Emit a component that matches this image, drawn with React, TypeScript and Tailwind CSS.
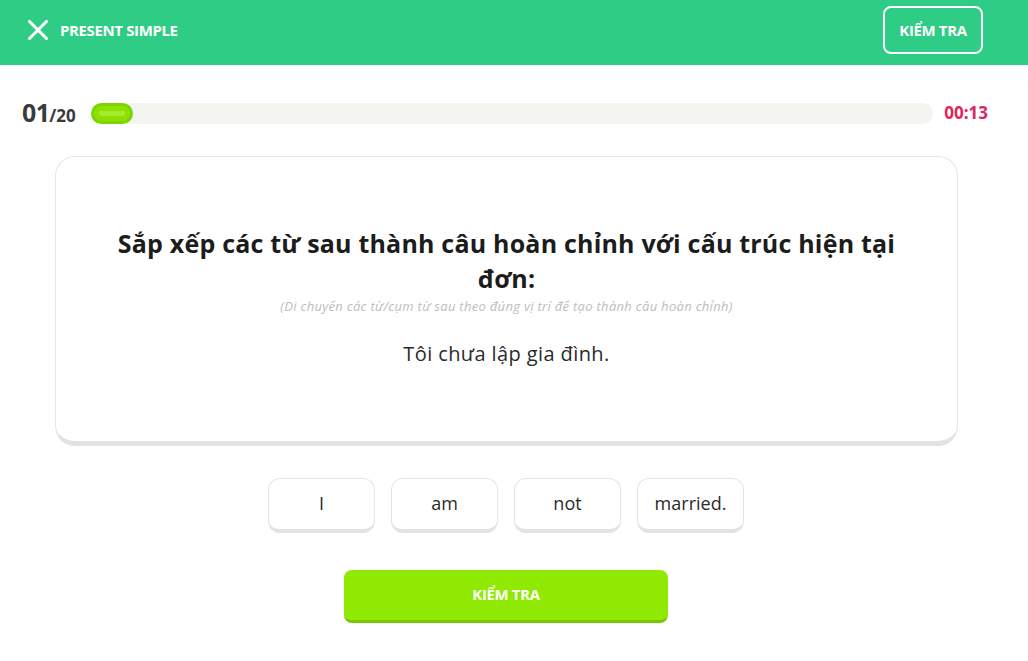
import { X } from 'lucide-react';

const words = ['I', 'am', 'not', 'married.'];

export default function App() {
    return (
        <div className="min-h-screen bg-white flex flex-col" style={{ fontFamily: '"Open Sans", "Noto Sans", sans-serif' }}>
            {/* Top bar */}
            <div className="h-[65px] bg-[#2ecc85] flex items-center justify-between pl-[21px] pr-[45px] pb-[5px]">
                <div className="flex items-center gap-[5px]">
                    <X className="w-[34px] h-[34px] text-white" strokeWidth={2.2} />
                    <span className="text-white font-bold text-[15px] tracking-tight">PRESENT SIMPLE</span>
                </div>
                <button className="w-[100px] h-[48px] rounded-lg border-2 border-white text-white font-bold text-[15px] tracking-tight">
                    KIỂM TRA
                </button>
            </div>

            {/* Progress */}
            <div className="flex items-center mt-[37px] pl-[22px] pr-[40px] h-[22px]">
                <div className="flex items-baseline text-[#3a3a3a] font-bold w-[69px]">
                    <span className="text-[25px] tracking-tight">01</span>
                    <span className="text-[17px]">/20</span>
                </div>
                <div className="flex-1 h-[21px] rounded-full bg-[#f4f5f1]">
                    <div className="w-[42px] h-full rounded-full bg-[#8de000] border-[3px] border-[#7dd400] flex items-center px-[5px]">
                        <div className="h-[5px] w-full rounded-full bg-[#a4ec30]" />
                    </div>
                </div>
                <span className="ml-[11px] text-[#e0245e] font-bold text-[17px]">00:13</span>
            </div>

            {/* Question card */}
            <div className="mx-[55px] mt-[32px] w-[903px] rounded-[20px] border border-[#e6e6e6] border-b-[5px] border-b-[#e2e4df] bg-white pt-[69px] pb-[72px] flex flex-col items-center">
                <h1 className="max-w-[800px] text-center text-[25px] leading-[35px] font-bold tracking-[0.2px] text-[#1c1c1c]">
                    Sắp xếp các từ sau thành câu hoàn chỉnh với cấu trúc hiện tại đơn:
                </h1>
                <p className="mt-[1px] text-[13px] italic tracking-[0.3px] text-[#bdbdbd]">
                    (Di chuyển các từ/cụm từ sau theo đúng vị trí để tạo thành câu hoàn chỉnh)
                </p>
                <p className="mt-[22px] text-[20px] tracking-[0.4px] text-[#2a2a2a]">Tôi chưa lập gia đình.</p>
            </div>

            {/* Word chips */}
            <div className="mt-[32px] flex justify-center gap-[16px] pr-[16px]">
                {words.map(w => (
                    <div
                        key={w}
                        className="w-[107px] h-[55px] rounded-[12px] border border-[#e4e4e4] border-b-[4px] border-b-[#e2e4df] bg-white flex items-center justify-center text-[18px] text-[#2a2a2a]"
                    >
                        {w}
                    </div>
                ))}
            </div>

            {/* Submit */}
            <div className="mt-[37px] flex justify-center pr-[16px]">
                <button className="w-[324px] h-[53px] rounded-lg bg-[#8fe900] border-b-[3px] border-b-[#78c800] text-white font-bold text-[15px] tracking-tight">
                    KIỂM TRA
                </button>
            </div>
        </div>
    );
}
